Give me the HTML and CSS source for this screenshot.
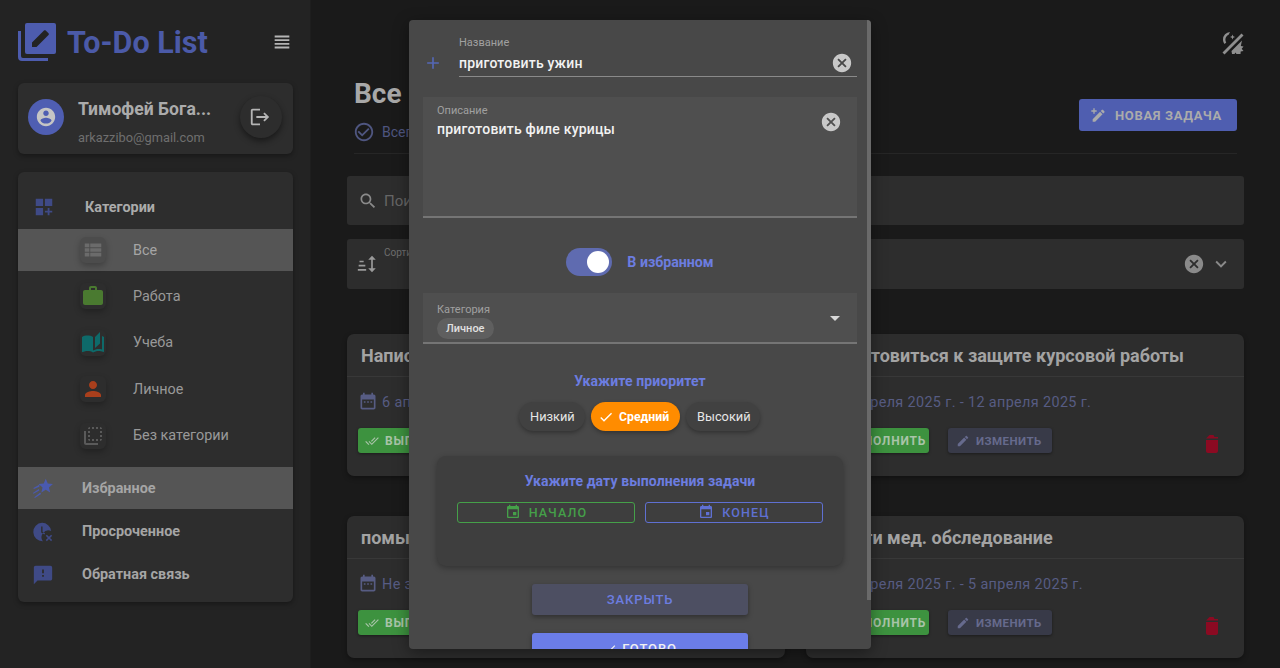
FILE: index.html
```html
<!DOCTYPE html>
<html lang="ru">
<head>
<meta charset="utf-8">
<title>To-Do List</title>
<link rel="stylesheet" href="styles.css">
</head>
<body>
<svg class="sprite" aria-hidden="true">
  <symbol id="i-headline" viewBox="0 0 24 24"><path d="M4 15h16v-2H4v2zm0 4h16v-2H4v2zm0-8h16V9H4v2zm0-6v2h16V5H4z"/></symbol>
  <symbol id="i-account" viewBox="0 0 24 24"><path d="M12 2C6.48 2 2 6.48 2 12s4.48 10 10 10 10-4.48 10-10S17.52 2 12 2zm0 3c1.66 0 3 1.34 3 3s-1.34 3-3 3-3-1.34-3-3 1.34-3 3-3zm0 14.2c-2.5 0-4.71-1.28-6-3.22.03-1.99 4-3.08 6-3.08 1.99 0 5.97 1.09 6 3.08-1.29 1.94-3.5 3.22-6 3.22z"/></symbol>
  <symbol id="i-logout" viewBox="0 0 24 24"><path d="M17 7l-1.41 1.41L18.17 11H8v2h10.17l-2.58 2.58L17 17l5-5zM4 5h8V3H4c-1.1 0-2 .9-2 2v14c0 1.1.9 2 2 2h8v-2H4V5z"/></symbol>
  <symbol id="i-dash" viewBox="0 0 24 24"><path d="M3 3h8v8H3zM13 3h8v8h-8zM3 13h8v8H3zM18 13h-2v3h-3v2h3v3h2v-3h3v-2h-3z"/></symbol>
  <symbol id="i-list" viewBox="0 0 24 24"><path d="M3 14h5v-4H3v4zm0 5h5v-4H3v4zM3 9h5V5H3v4zm6 5h12v-4H9v4zm0 5h12v-4H9v4zM9 5v4h12V5H9z"/></symbol>
  <symbol id="i-work" viewBox="0 0 24 24"><path d="M20 6h-4V4c0-1.11-.89-2-2-2h-4c-1.11 0-2 .89-2 2v2H4c-1.11 0-1.99.89-1.99 2L2 19c0 1.11.89 2 2 2h16c1.11 0 2-.89 2-2V8c0-1.11-.89-2-2-2zm-6 0h-4V4h4v2z"/></symbol>
  <symbol id="i-book" viewBox="0 0 24 24"><path d="M19 1l-5 5v11l5-4.5V1zM1 6v14.65c0 .25.25.5.5.5.1 0 .15-.05.25-.05C3.1 20.45 5.05 20 6.5 20c1.95 0 4.05.4 5.5 1.5V6c-1.45-1.1-3.55-1.5-5.5-1.5S2.45 4.9 1 6zm22 13.5V6c-.6-.45-1.25-.75-2-1v13.5c-1.1-.35-2.3-.5-3.5-.5-1.7 0-4.15.65-5.5 1.5v2c1.35-.85 3.8-1.5 5.5-1.5 1.65 0 3.35.3 4.75 1.05.1.05.15.05.25.05.25 0 .5-.25.5-.5v-1.1c-.25-.05-.5-.1-1-.2z"/></symbol>
  <symbol id="i-person" viewBox="0 0 24 24"><path d="M12 12c2.21 0 4-1.79 4-4s-1.79-4-4-4-4 1.79-4 4 1.79 4 4 4zm0 2c-2.67 0-8 1.34-8 4v2h16v-2c0-2.66-5.33-4-8-4z"/></symbol>
  <symbol id="i-flip" viewBox="0 0 24 24"><path d="M9 7H7v2h2V7zm0 4H7v2h2v-2zm0-8c-1.11 0-2 .9-2 2h2V3zm4 12h-2v2h2v-2zm6-12v2h2c0-1.1-.9-2-2-2zm-6 0h-2v2h2V3zM9 17v-2H7c0 1.1.89 2 2 2zm10-4h2v-2h-2v2zm0-4h2V7h-2v2zm0 8c1.1 0 2-.9 2-2h-2v2zM5 7H3v12c0 1.1.89 2 2 2h12v-2H5V7zm10-2h2V3h-2v2zm0 12h2v-2h-2v2z"/></symbol>
  <symbol id="i-star" viewBox="0 0 24 24"><path d="M15 2l2.200 5.200 5.600.5-4.300 3.700 1.300 5.500-4.800-2.900-4.800 2.900 1.300-5.500-4.300-3.700 5.600-.5zM8 8.500L1.500 12l.5 1 6-2.500zM7.500 13L1 17.500l.6.9 6.400-3.600zM9 17l-6.500 5 .6.8L10 18.500z"/></symbol>
  <symbol id="i-overdue" viewBox="0 0 24 24"><path fill-rule="evenodd" d="M11 2a10 10 0 0 1 9.900 8.800 7.500 7.500 0 0 0-9.100 11.200A10 10 0 0 1 11 2zM10 6v6.500l3.500 2.100.8-1.300-2.800-1.700V6z"/><path d="M16.200 15l2.300 2.300 2.300-2.300 1.200 1.200-2.300 2.300 2.300 2.300-1.200 1.200-2.300-2.300-2.300 2.300-1.200-1.200 2.300-2.300-2.300-2.300z"/></symbol>
  <symbol id="i-feedback" viewBox="0 0 24 24"><path d="M20 2H4c-1.100 0-1.990.9-1.990 2L2 22l4-4h14c1.100 0 2-.9 2-2V4c0-1.100-.9-2-2-2zm-7 12h-2v-2h2v2zm0-4h-2V6h2v4z"/></symbol>
  <symbol id="i-edit" viewBox="0 0 24 24"><path d="M3 17.250V21h3.750L17.810 9.940l-3.750-3.750L3 17.250zM20.710 7.040c.39-.39.39-1.020 0-1.410l-2.340-2.340c-.39-.39-1.020-.39-1.410 0l-1.830 1.830 3.750 3.750 1.830-1.830z"/></symbol>
  <symbol id="i-editplus" viewBox="0 0 24 24"><path d="M4 18.250V22h3.750L18.810 10.940l-3.750-3.750L4 18.250zM21.710 8.040c.39-.39.39-1.020 0-1.410l-2.340-2.340c-.39-.39-1.020-.39-1.410 0l-1.830 1.830 3.750 3.750 1.830-1.830zM5 2h2v3h3v2H7v3H5V7H2V5h3z"/></symbol>
  <symbol id="i-doneall" viewBox="0 0 24 24"><path d="M18 7l-1.410-1.410-6.340 6.340 1.410 1.410L18 7zm4.240-1.410L11.660 16.170 7.480 12l-1.410 1.410L11.660 19l12-12-1.420-1.410zM.41 13.410L6 19l1.410-1.410L1.830 12 .41 13.410z"/></symbol>
  <symbol id="i-delete" viewBox="0 0 24 24"><path d="M6 19c0 1.100.9 2 2 2h8c1.100 0 2-.9 2-2V8H6v11zM18 6.500V5h-3.500l-1-2h-4L6 6.500z"/></symbol>
  <symbol id="i-event" viewBox="0 0 24 24"><path d="M17 12h-5v5h5v-5zM16 1v2H8V1H6v2H5c-1.110 0-1.990.9-1.990 2L3 19c0 1.100.89 2 2 2h14c1.100 0 2-.9 2-2V5c0-1.100-.9-2-2-2h-1V1h-2zm3 18H5V8h14v11z"/></symbol>
  <symbol id="i-calendar" viewBox="0 0 24 24"><path fill-rule="evenodd" d="M19 3h-1V1h-2v2H8V1H6v2H5c-1.100 0-2 .9-2 2v14c0 1.100.9 2 2 2h14c1.100 0 2-.9 2-2V5c0-1.100-.9-2-2-2zm0 16H5V9h14zM7 11h2v2H7zm4 0h2v2h-2zm4 0h2v2h-2z"/></symbol>
  <symbol id="i-checkcircle" viewBox="0 0 24 24"><path d="M16.590 7.580L10 14.170l-3.590-3.580L5 12l5 5 8-8zM12 2C6.480 2 2 6.480 2 12s4.480 10 10 10 10-4.480 10-10S17.520 2 12 2zm0 18c-4.420 0-8-3.580-8-8s3.580-8 8-8 8 3.580 8 8-3.580 8-8 8z"/></symbol>
  <symbol id="i-search" viewBox="0 0 24 24"><path d="M15.500 14h-.79l-.28-.27C15.410 12.590 16 11.110 16 9.500 16 5.910 13.090 3 9.500 3S3 5.910 3 9.500 5.910 16 9.500 16c1.610 0 3.090-.59 4.230-1.570l.27.28v.79l5 4.990L20.490 19l-4.990-5zm-6 0C7.010 14 5 11.990 5 9.500S7.010 5 9.500 5 14 7.010 14 9.500 11.990 14 9.500 14z"/></symbol>
  <symbol id="i-sort" viewBox="0 0 24 24"><path d="M3 8h5v2H3zM2 13h8v2H2zM1 18h10v2H1zM18 2l4.500 5H19v10h3.500L18 22l-4.500-5H17V7h-3.500z"/></symbol>
  <symbol id="i-cancel" viewBox="0 0 24 24"><path d="M12 2C6.470 2 2 6.470 2 12s4.470 10 10 10 10-4.470 10-10S17.530 2 12 2zm5 13.590L15.590 17 12 13.410 8.410 17 7 15.590 10.590 12 7 8.410 8.410 7 12 10.590 15.590 7 17 8.410 13.410 12 17 15.590z"/></symbol>
  <symbol id="i-chevron" viewBox="0 0 24 24"><path d="M16.590 8.590L12 13.170 7.410 8.590 6 10l6 6 6-6z"/></symbol>
  <symbol id="i-plus" viewBox="0 0 24 24"><path d="M19 13h-6v6h-2v-6H5v-2h6V5h2v6h6v2z"/></symbol>
  <symbol id="i-check" viewBox="0 0 24 24"><path d="M9 16.170L4.830 12l-1.420 1.410L9 19 21 7l-1.410-1.410z"/></symbol>
  <symbol id="i-caret" viewBox="0 0 24 24"><path d="M7 10l5 5 5-5z"/></symbol>
  <symbol id="i-theme" viewBox="0 0 24 24"><path d="M9 1A7.500 7.500 0 0 0 2 8.500c0 1.700.6 3.300 1.600 4.500L5.200 11.400A5.200 5.200 0 0 1 4.400 8.500c0-2.100 1.300-4 3.200-4.800zM1.500 21.500L20.500 2.500l2 2-19 19zM11.500 3.500l.7 1.800 1.800.7-1.800.7-.7 1.800-.7-1.800-1.800-.7 1.800-.7zM21 9.500L10.500 20l.5 3h2.500l1-1.500 1 1.500h4l.2-2.500 2.800-.5-1.800-2.200 1.800-2.300-2.700-.5z"/></symbol>
</svg>

<div class="page">
  <aside class="sidebar">
    <header class="brand">
      <svg class="brand-logo" viewBox="0 0 38 38">
        <path class="logo-stack" d="M0 8h3v25a2 2 0 0 0 2 2h25v3H4a4 4 0 0 1-4-4z"/>
        <rect class="logo-sheet" x="7" y="0" width="31" height="31" rx="2"/>
        <path class="logo-pen" d="M14 19.500V24h4.500L29 13.500 24.500 9zM30.500 12c.5-.5.5-1.200 0-1.700l-2.800-2.800c-.5-.5-1.200-.5-1.700 0l-1.500 1.500 4.500 4.500z"/>
      </svg>
      <span class="brand-name">To-Do List</span>
      <svg class="brand-menu"><use href="#i-headline"/></svg>
    </header>

    <section class="user-card">
      <span class="avatar"><svg><use href="#i-account"/></svg></span>
      <div class="user-info">
        <div class="user-name">Тимофей Бога...</div>
        <div class="user-mail">arkazzibo@gmail.com</div>
      </div>
      <span class="logout"><svg><use href="#i-logout"/></svg></span>
    </section>

    <nav class="nav-card">
      <div class="nav-head">
        <svg class="nav-main-icon"><use href="#i-dash"/></svg>
        <span>Категории</span>
      </div>
      <div class="cat cat-active"><span class="cat-icon ic-grey"><svg><use href="#i-list"/></svg></span><span>Все</span></div>
      <div class="cat"><span class="cat-icon ic-green"><svg><use href="#i-work"/></svg></span><span>Работа</span></div>
      <div class="cat"><span class="cat-icon ic-teal"><svg><use href="#i-book"/></svg></span><span>Учеба</span></div>
      <div class="cat"><span class="cat-icon ic-red"><svg><use href="#i-person"/></svg></span><span>Личное</span></div>
      <div class="cat"><span class="cat-icon ic-dim"><svg><use href="#i-flip"/></svg></span><span>Без категории</span></div>
      <div class="nav-link nav-link-active"><svg class="nav-main-icon nav-star"><use href="#i-star"/></svg><span>Избранное</span></div>
      <div class="nav-link"><svg class="nav-main-icon"><use href="#i-overdue"/></svg><span>Просроченное</span></div>
      <div class="nav-link"><svg class="nav-main-icon"><use href="#i-feedback"/></svg><span>Обратная связь</span></div>
    </nav>
  </aside>

  <main class="main">
    <div class="topbar"><svg class="theme-icon"><use href="#i-theme"/></svg></div>
    <div class="heading">
      <div class="heading-text">
        <h1 class="title">Все задачи</h1>
        <div class="subtitle"><svg><use href="#i-checkcircle"/></svg><span>Всего задач: 4</span></div>
      </div>
      <div class="new-btn"><svg><use href="#i-editplus"/></svg><span>Новая задача</span></div>
    </div>
    <div class="search-bar"><svg><use href="#i-search"/></svg><span>Поиск</span></div>
    <div class="sort-bar">
      <svg class="sort-icon"><use href="#i-sort"/></svg>
      <span class="sort-label">Сортировка</span>
      <svg class="sort-clear"><use href="#i-cancel"/></svg>
      <svg class="sort-chevron"><use href="#i-chevron"/></svg>
    </div>
    <div class="cards">
      <article class="card">
        <h2 class="card-title">Написать статью</h2>
        <div class="card-body">
          <div class="card-date"><svg><use href="#i-calendar"/></svg><span>6 апреля 2025 г.</span></div>
          <div class="card-actions">
            <span class="btn-done"><svg><use href="#i-doneall"/></svg>Выполнить</span>
            <span class="btn-edit"><svg><use href="#i-edit"/></svg>Изменить</span>
            <svg class="btn-del"><use href="#i-delete"/></svg>
          </div>
        </div>
      </article>
      <article class="card">
        <h2 class="card-title">Подготовиться к защите курсовой работы</h2>
        <div class="card-body">
          <div class="card-date"><svg><use href="#i-calendar"/></svg><span>1 апреля 2025 г. - 12 апреля 2025 г.</span></div>
          <div class="card-actions">
            <span class="btn-done"><svg><use href="#i-doneall"/></svg>Выполнить</span>
            <span class="btn-edit"><svg><use href="#i-edit"/></svg>Изменить</span>
            <svg class="btn-del"><use href="#i-delete"/></svg>
          </div>
        </div>
      </article>
      <article class="card">
        <h2 class="card-title">помыть посуду</h2>
        <div class="card-body">
          <div class="card-date"><svg><use href="#i-calendar"/></svg><span>Не задано</span></div>
          <div class="card-actions">
            <span class="btn-done"><svg><use href="#i-doneall"/></svg>Выполнить</span>
            <span class="btn-edit"><svg><use href="#i-edit"/></svg>Изменить</span>
            <svg class="btn-del"><use href="#i-delete"/></svg>
          </div>
        </div>
      </article>
      <article class="card">
        <h2 class="card-title">Пройти мед. обследование</h2>
        <div class="card-body">
          <div class="card-date"><svg><use href="#i-calendar"/></svg><span>1 апреля 2025 г. - 5 апреля 2025 г.</span></div>
          <div class="card-actions">
            <span class="btn-done"><svg><use href="#i-doneall"/></svg>Выполнить</span>
            <span class="btn-edit"><svg><use href="#i-edit"/></svg>Изменить</span>
            <svg class="btn-del"><use href="#i-delete"/></svg>
          </div>
        </div>
      </article>
    </div>
  </main>
</div>

<div class="modal">
  <div class="scrollbar"></div>
  <div class="name-row">
    <svg class="name-plus"><use href="#i-plus"/></svg>
    <div class="name-field">
      <div class="field-label">Название</div>
      <div class="name-value"><span>приготовить ужин</span><svg class="clear"><use href="#i-cancel"/></svg></div>
    </div>
  </div>
  <div class="desc-field">
    <div class="desc-text">
      <div class="field-label">Описание</div>
      <div class="desc-value">приготовить филе курицы</div>
    </div>
    <svg class="clear"><use href="#i-cancel"/></svg>
  </div>
  <div class="fav-row">
    <span class="toggle"><span class="toggle-thumb"></span></span>
    <span class="fav-label">В избранном</span>
  </div>
  <div class="cat-field">
    <div>
      <div class="field-label">Категория</div>
      <span class="chip-small">Личное</span>
    </div>
    <svg class="caret"><use href="#i-caret"/></svg>
  </div>
  <div class="section-title prio-title">Укажите приоритет</div>
  <div class="prio-row">
    <span class="prio prio-low">Низкий</span>
    <span class="prio prio-mid"><svg><use href="#i-check"/></svg>Средний</span>
    <span class="prio prio-high">Высокий</span>
  </div>
  <div class="date-panel">
    <div class="section-title">Укажите дату выполнения задачи</div>
    <div class="date-btns">
      <span class="date-btn date-start"><svg><use href="#i-event"/></svg>Начало</span>
      <span class="date-btn date-end"><svg><use href="#i-event"/></svg>Конец</span>
    </div>
  </div>
  <div class="action action-close">Закрыть</div>
  <div class="action action-done"><svg><use href="#i-check"/></svg>Готово</div>
</div>
</body>
</html>
```

FILE: styles.css
```css
* { box-sizing: border-box; }
html, body { margin: 0; height: 100%; overflow: hidden; }
body { background: #1a1a1a; color: #ababab; font-family: Roboto, "Noto Sans", sans-serif; }
svg { fill: currentColor; display: block; flex: none; }
.sprite { position: absolute; width: 0; height: 0; }

.page { display: flex; height: 668px; }

/* Sidebar */
.sidebar { width: 311px; flex: none; padding: 23px 17px 0 18px; background: #232323; border-right: 1px solid #1e1e1e; }
.brand { display: flex; align-items: center; height: 38px; margin-bottom: 22px; }
.brand-logo { width: 38px; height: 38px; }
.logo-stack, .logo-sheet { fill: #4d5cae; }
.logo-pen { fill: #232323; }
.brand-name { margin-left: 11px; font-size: 30.5px; font-weight: 700; color: #4b5aa8; }
.brand-menu { width: 22px; height: 22px; margin-left: auto; color: #b5b5b5; }

.user-card { display: flex; align-items: center; height: 71px; padding: 0 11px 4px 10px; background: #2d2d2d; border-radius: 6px; box-shadow: 0 2px 5px rgba(0,0,0,.35); }
.avatar { display: flex; align-items: center; justify-content: center; width: 36px; height: 36px; border-radius: 50%; background: #4f5eb2; color: #c5c5c5; }
.avatar svg { width: 22px; height: 22px; }
.user-info { flex: 1; margin-left: 14px; }
.user-name { font-size: 17.6px; font-weight: 700; color: #ababab; line-height: 20px; margin-top: 11px; }
.user-mail { font-size: 12.8px; color: #6f6f6f; line-height: 16px; margin-top: 11px; }
.logout { display: flex; align-items: center; justify-content: center; width: 42px; height: 42px; border-radius: 50%; background: #2d2d2d; color: #b5b5b5; box-shadow: 0 3px 6px rgba(0,0,0,.45); }
.logout svg { width: 22px; height: 22px; margin-left: -2px; }

.nav-card { margin-top: 18px; height: 430px; padding-top: 13px; background: #2d2d2d; border-radius: 6px; box-shadow: 0 2px 5px rgba(0,0,0,.35); }
.nav-head { display: flex; align-items: center; height: 44px; padding-left: 15px; font-size: 14.4px; font-weight: 700; color: #ababab; }
.nav-head span { margin-left: 30px; }
.nav-main-icon { width: 22px; height: 22px; color: #3f4a86; }
.cat { display: flex; align-items: center; height: 46.5px; padding-left: 62px; font-size: 14.4px; color: #999; }
.cat-active { height: 42px; background: #555; color: #a5a5a5; margin-bottom: 2px; }
.cat-icon { display: flex; align-items: center; justify-content: center; width: 26px; height: 26px; border-radius: 6px; margin-right: 27px; box-shadow: 0 3px 6px rgba(0,0,0,.25); }
.cat-icon svg { width: 24px; height: 24px; }
.ic-grey { background: #4c4c4c; color: #6b6b6b; }
.ic-grey svg { width: 22px; height: 22px; }
.ic-green { color: #4a7a30; }
.ic-teal { color: #0e6a6a; }
.ic-red { color: #a93f1c; }
.ic-dim { color: #5a5a5a; }
.nav-link { display: flex; align-items: center; height: 43px; padding-left: 14px; font-size: 14.4px; font-weight: 700; color: #a5a5a5; }
.nav-link span { margin-left: 28px; }
.nav-link-active { height: 42px; margin-top: 8px; margin-bottom: 1px; background: #555; }
.nav-star { color: #4a5aaf; }

/* Main */
.main { flex: 1; padding: 0 36px; }
.topbar { display: flex; justify-content: flex-end; height: 62px; padding-top: 31px; }
.theme-icon { width: 24px; height: 24px; margin-right: -1px; color: #8f8f8f; }
.heading { display: flex; align-items: flex-start; justify-content: space-between; height: 92px; margin: 0 7px; border-bottom: 1px solid #262626; }
.heading-text { padding-top: 15px; }
.title { margin: 0; font-size: 28px; line-height: 34px; font-weight: 700; color: #a8a8a8; }
.subtitle { display: flex; align-items: center; margin-top: 10px; font-size: 14px; color: #4f5680; }
.subtitle svg { width: 22px; height: 22px; margin-left: -1px; margin-right: 7px; }
.new-btn { display: flex; align-items: center; height: 32px; width: 158px; margin-top: 37px; padding-left: 11px; background: #4f5eb0; border-radius: 3px; font-size: 13px; font-weight: 700; letter-spacing: .65px; text-transform: uppercase; color: #ababab; }
.new-btn svg { width: 16px; height: 16px; margin-right: 9px; }
.search-bar { display: flex; align-items: center; height: 49px; margin-top: 22px; padding-left: 11px; background: #2d2d2d; border-radius: 3px; font-size: 15px; color: #666; }
.search-bar svg { width: 20px; height: 20px; margin-right: 6px; color: #8a8a8a; }
.sort-bar { display: flex; align-items: center; height: 50px; margin-top: 14px; padding: 0 12px 0 10px; background: #2d2d2d; border-radius: 3px; }
.sort-icon { width: 20px; height: 20px; color: #9a9a9a; }
.sort-label { align-self: flex-start; margin: 8px 0 0 7px; font-size: 10px; color: #6f6f6f; }
.sort-clear { width: 22px; height: 22px; margin-left: auto; color: #8a8a8a; }
.sort-chevron { width: 22px; height: 22px; margin-left: 5px; color: #8a8a8a; }

.cards { display: grid; grid-template-columns: 438px 438px; column-gap: 21px; row-gap: 40px; margin-top: 45px; }
.card { height: 142px; background: #2d2d2d; border-radius: 7px; box-shadow: 0 2px 5px rgba(0,0,0,.35); }
.card-title { display: flex; align-items: center; height: 43px; margin: 0; padding-left: 14px; border-bottom: 1px solid #383838; font-size: 18px; font-weight: 700; color: #a3a3a3; }
.card-body { padding: 16px 12px 0 11px; }
.card-date { display: flex; align-items: center; font-size: 14.4px; letter-spacing: .36px; color: #575c83; }
.card-date svg { width: 20px; height: 20px; margin-right: 4px; margin-top: -1px; }
.card-actions { display: flex; align-items: center; margin-top: 16px; height: 25px; font-size: 12px; font-weight: 700; letter-spacing: .8px; text-transform: uppercase; }
.btn-done, .btn-edit { display: flex; align-items: center; height: 25px; border-radius: 3px; box-shadow: 0 1px 3px rgba(0,0,0,.4); }
.btn-done svg, .btn-edit svg { width: 14px; height: 14px; margin-right: 6px; }
.btn-done { width: 112px; padding-left: 7px; background: #3d923f; color: #a9c4a9; }
.btn-edit { width: 104px; margin-left: 19px; padding-left: 8px; background: #383a48; color: #666a8d; font-size: 11.5px; letter-spacing: .45px; }
.btn-del { width: 24px; height: 24px; margin-left: auto; margin-right: 8px; margin-top: 7px; color: #8b0a22; }

/* Modal */
.modal { position: absolute; left: 409px; top: 20px; width: 462px; height: 629px; padding: 0 14px; overflow: hidden; background: #484848; border-radius: 4px; box-shadow: 0 4px 16px rgba(0,0,0,.4); }
.scrollbar { position: absolute; right: 0; top: 0; width: 4px; height: 580px; background: #6a6a6a; }
.field-label { font-size: 11px; line-height: 13px; color: #a0a0a0; }
.name-row { display: flex; align-items: flex-end; height: 57px; }
.name-plus { width: 20px; height: 20px; margin-bottom: 4px; color: #5467b5; }
.name-field { flex: 1; margin-left: 16px; }
.name-value { display: flex; align-items: center; justify-content: space-between; height: 27px; margin-top: 1px; padding-right: 4px; border-bottom: 1px solid #8a8a8a; font-size: 14px; font-weight: 500; letter-spacing: .2px; color: #f2f2f2; }
.clear { width: 22px; height: 22px; color: #c8c8c8; }
.desc-field { display: flex; justify-content: space-between; height: 121px; margin-top: 20px; padding: 7px 14px 0; background: #4f4f4f; border-bottom: 2px solid #757575; }
.desc-value { margin-top: 4px; font-size: 14px; font-weight: 500; letter-spacing: .2px; color: #f2f2f2; }
.desc-field .clear { margin-top: 7px; margin-right: 1px; }
.fav-row { display: flex; align-items: center; justify-content: center; height: 28px; margin-top: 30px; }
.toggle { display: flex; align-items: center; justify-content: flex-end; width: 46px; height: 28px; padding-right: 3px; border-radius: 14px; background: #5f6bb0; }
.toggle-thumb { width: 22px; height: 22px; border-radius: 50%; background: #fff; }
.fav-label { margin-left: 15px; font-size: 14.2px; font-weight: 700; color: #6c7de0; }
.cat-field { display: flex; align-items: center; justify-content: space-between; height: 51px; margin-top: 17px; padding: 6px 14px 0; background: #4f4f4f; border-bottom: 2px solid #757575; }
.chip-small { display: inline-flex; align-items: center; height: 21px; margin-top: 2px; padding: 0 9px; border-radius: 11px; background: #5f5f5f; font-size: 11px; font-weight: 500; color: #e0e0e0; }
.caret { width: 24px; height: 24px; margin-right: -4px; margin-top: -6px; color: #d8d8d8; }
.section-title { font-size: 14px; font-weight: 700; line-height: 17px; letter-spacing: .1px; text-align: center; color: #6c7de0; }
.prio-title { margin-top: 29px; }
.prio-row { display: flex; justify-content: center; gap: 6px; margin-top: 12px; padding-right: 1px; font-size: 12.8px; }
.prio { display: flex; align-items: center; height: 29px; border-radius: 15px; background: #414141; color: #e6e6e6; box-shadow: 0 2px 4px rgba(0,0,0,.3); }
.prio-low { width: 66px; padding-left: 11px; }
.prio-mid { width: 89px; padding-left: 7px; background: #ff8c00; color: #fff; font-weight: 700; font-size: 12.3px; }
.prio-mid svg { width: 16px; height: 16px; margin-right: 5px; }
.prio-high { width: 74px; padding-left: 11px; }
.date-panel { height: 110px; margin: 25px 14px 0; padding: 17px 20px 0; background: #3e3e3e; border-radius: 9px; box-shadow: 0 2px 6px rgba(0,0,0,.3); }
.date-btns { display: flex; gap: 10px; margin-top: 12px; }
.date-btn { display: flex; align-items: center; justify-content: center; flex: 1; height: 21px; border: 1px solid; border-radius: 3px; font-size: 12.5px; font-weight: 500; letter-spacing: 1.2px; text-transform: uppercase; }
.date-btn svg { width: 16px; height: 16px; margin-right: 8px; margin-top: -1px; }
.date-start { color: #45a049; }
.date-end { color: #5f70d2; }
.action { display: flex; align-items: center; justify-content: center; width: 216px; height: 31px; margin: 18px auto 0; border-radius: 3px; font-size: 13px; font-weight: 500; letter-spacing: .9px; text-transform: uppercase; box-shadow: 0 2px 5px rgba(0,0,0,.35); }
.action-close { background: #4d4f62; color: #6c7de0; }
.action-done { background: #6b7de8; color: #f0f0f0; }
.action-done svg { width: 14px; height: 14px; margin-right: 5px; }
```
